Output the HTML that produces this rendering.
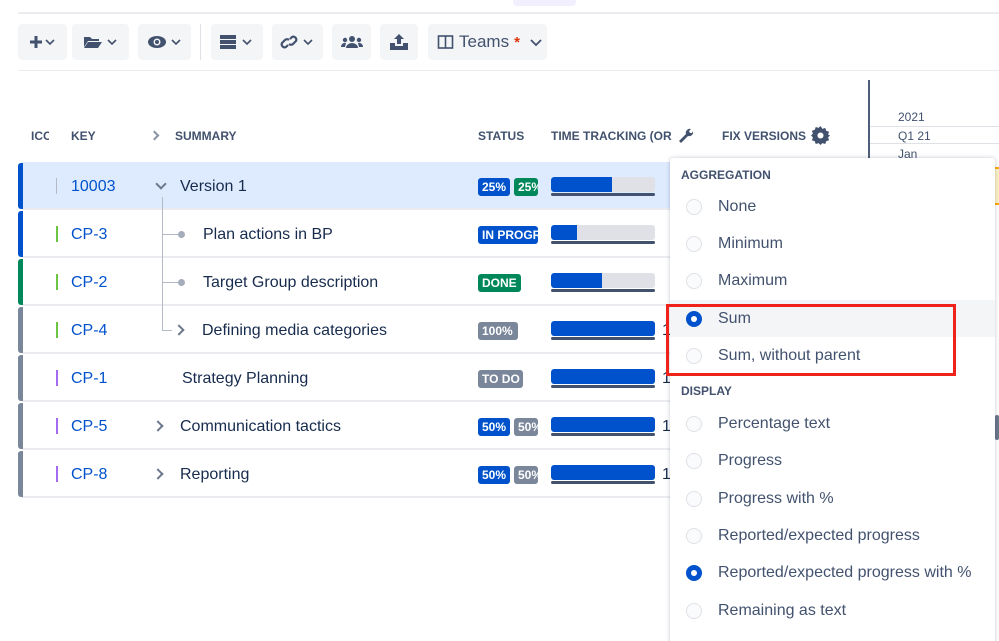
<!DOCTYPE html>
<html><head><meta charset="utf-8"><style>
*{box-sizing:border-box;margin:0;padding:0}
html,body{width:999px;height:641px;overflow:hidden}
body{background:#fff;font-family:"Liberation Sans",Arial,sans-serif;color:#172b4d;position:relative}
.a{position:absolute}
.btn{position:absolute;top:24px;height:36px;background:#f4f5f7;border-radius:4px;display:flex;align-items:center;justify-content:center;gap:4px}
.hd{position:absolute;top:129px;font-size:12px;font-weight:bold;color:#42526e}
.row{position:absolute;left:22px;width:660px;height:48px;border-bottom:2px solid #ebecf0}
.stripe{position:absolute;left:18px;width:5px;height:46px;border-radius:3px 0 0 3px}
.key{position:absolute;left:71px;font-size:16px;color:#0052cc}
.ib{position:absolute;left:56px;width:2px;height:16px}
.sum{position:absolute;font-size:16px;color:#172b4d}
.bd{position:absolute;height:18px;border-radius:3px;color:#fff;font-size:12px;font-weight:bold;line-height:18px;padding-left:4px;overflow:hidden;white-space:nowrap}
.bar{position:absolute;left:551px;width:104px;height:15px;background:#dfe1e6;border-radius:3px;overflow:hidden}
.bar i{display:block;height:100%;background:#0052cc;border-radius:3px 0 0 3px}
.ul{position:absolute;left:551px;width:104px;height:3px;background:#42526e;border-radius:2px}
.one{position:absolute;left:662px;font-size:16px;color:#172b4d}
.pop{position:absolute;left:670px;top:158px;width:325px;height:490px;background:#fff;box-shadow:0 0 4px rgba(9,30,66,.25);border-radius:3px}
.it{position:absolute;left:0;width:325px;height:37px;font-size:16px;color:#42526e}
.it span{position:absolute;left:48px;top:10px}
.rd{position:absolute;left:16px;top:11px;width:16px;height:16px;border-radius:50%;border:1.5px solid #dfe1e6;background:#fafbfc}
.rd.on{border:none;background:#0052cc}
.rd.on:after{content:"";position:absolute;left:5px;top:5px;width:6px;height:6px;border-radius:50%;background:#fff}
.sec{position:absolute;left:11px;font-size:12px;font-weight:bold;color:#42526e}
.chev{position:absolute;width:8px;height:8px;border-right:2px solid #6b778c;border-bottom:2px solid #6b778c}
</style></head><body>
<div class="a" style="left:513px;top:0;width:63px;height:6px;background:#eae6ff;border-radius:0 0 4px 4px;opacity:.6"></div>
<div class="a" style="left:18px;top:12px;width:981px;height:2px;background:#ebecf0"></div>
<div class="a" style="left:18px;top:70px;width:981px;height:1px;background:#ebecf0"></div>

<div class="btn" style="left:18px;width:49px"><svg width="28" height="14" viewBox="0 0 28 14"><path d="M7 1v12M1 7h12" stroke="#42526e" stroke-width="3"/><path d="M17 5l4 4 4-4" stroke="#42526e" stroke-width="1.6" fill="none"/></svg></div>
<div class="btn" style="left:72px;width:57px"><svg width="36" height="14" viewBox="0 0 36 14"><path d="M1 2h6l2 2h7v2H5L1 12z M5 7h14l-4 6H1z" fill="#42526e"/><path d="M25 5l4 4 4-4" stroke="#42526e" stroke-width="1.6" fill="none"/></svg></div>
<div class="btn" style="left:138px;width:53px"><svg width="36" height="14" viewBox="0 0 36 14"><ellipse cx="10" cy="7" rx="9" ry="6" fill="#42526e"/><circle cx="10" cy="7" r="3.5" fill="#f4f5f7"/><circle cx="10" cy="7" r="2" fill="#42526e"/><path d="M25 5l4 4 4-4" stroke="#42526e" stroke-width="1.6" fill="none"/></svg></div>
<div class="a" style="left:200px;top:24px;width:1px;height:36px;background:#dfe1e6"></div>
<div class="btn" style="left:211px;width:52px"><svg width="36" height="16" viewBox="0 0 36 16"><rect x="1" y="1" width="16" height="4" fill="#42526e"/><rect x="1" y="6" width="16" height="4" fill="#42526e"/><rect x="1" y="11" width="16" height="4" fill="#42526e"/><path d="M24 6l4 4 4-4" stroke="#42526e" stroke-width="1.6" fill="none"/></svg></div>
<div class="btn" style="left:272px;width:51px"><svg width="36" height="18" viewBox="0 0 36 18"><path d="M8 12l-2 2a3 3 0 0 1-4-4l3-3a3 3 0 0 1 4 0M10 6l2-2a3 3 0 0 1 4 4l-3 3a3 3 0 0 1-4 0" stroke="#42526e" stroke-width="2.2" fill="none"/><path d="M24 7l4 4 4-4" stroke="#42526e" stroke-width="1.6" fill="none"/></svg></div>
<div class="btn" style="left:332px;width:39px"><svg width="22" height="14" viewBox="0 0 22 14"><circle cx="11" cy="4" r="3" fill="#42526e"/><circle cx="4" cy="5" r="2.2" fill="#42526e"/><circle cx="18" cy="5" r="2.2" fill="#42526e"/><path d="M5 13a6 5 0 0 1 12 0z M0 12a4 4 0 0 1 5-4l-1 4z M22 12a4 4 0 0 0-5-4l1 4z" fill="#42526e"/></svg></div>
<div class="btn" style="left:380px;width:38px"><svg width="20" height="18" viewBox="0 0 20 18"><path d="M10 1l5 5h-3v5H8V6H5z" fill="#42526e"/><path d="M1 10h5v3h8v-3h5v7H1z" fill="#42526e"/></svg></div>
<div class="btn" style="left:428px;width:119px;justify-content:flex-start;padding-left:9px;gap:0"><svg width="18" height="16" viewBox="0 0 18 16"><rect x="1.5" y="2" width="14" height="12" fill="none" stroke="#42526e" stroke-width="1.6"/><path d="M8.5 2v12" stroke="#42526e" stroke-width="1.6"/></svg><span style="font-size:17px;color:#42526e;margin-left:4px">Teams</span><span style="color:#de350b;font-weight:bold;margin-left:5px;font-size:15px">*</span><svg style="margin-left:10px" width="12" height="10" viewBox="0 0 12 10"><path d="M1 3l5 5 5-5" stroke="#42526e" stroke-width="1.8" fill="none"/></svg></div>

<div class="hd" style="left:31px;width:18px;overflow:hidden">ICON</div>
<div class="hd" style="left:71px">KEY</div>
<div class="chev" style="left:151px;top:132px;transform:rotate(-45deg);border-color:#8993a4;width:7px;height:7px"></div>
<div class="hd" style="left:175px">SUMMARY</div>
<div class="hd" style="left:478px">STATUS</div>
<div class="hd" style="left:551px">TIME TRACKING (OR</div>
<svg class="a" style="left:677px;top:127px" width="16" height="16" viewBox="0 0 16 16"><path d="M2 14l7-7a4 4 0 0 1 5-5l-2 2 1 2 2 0 1-2a4 4 0 0 1-5 5l-7 7z" fill="#42526e"/></svg>
<div class="hd" style="left:722px">FIX VERSIONS</div>
<svg class="a" style="left:811px;top:126px" width="19" height="19" viewBox="0 0 20 20"><path d="M10 0l2 3 3-1 1 3 3 1-1 3 2 1-2 2 1 3-3 1-1 3-3-1-2 2-2-2-3 1-1-3-3-1 1-3-2-2 2-2-1-3 3-1 1-3 3 1z" fill="#42526e"/><circle cx="10" cy="10" r="3.2" fill="#fff"/></svg>

<div class="a" style="left:868px;top:80px;width:2px;height:90px;background:#505f79"></div>
<div class="a" style="left:898px;top:110px;font-size:12px;color:#42526e">2021</div>
<div class="a" style="left:870px;top:126px;width:129px;height:1px;background:#dfe1e6"></div>
<div class="a" style="left:898px;top:129px;font-size:12px;color:#42526e">Q1 21</div>
<div class="a" style="left:870px;top:143px;width:129px;height:1px;background:#dfe1e6"></div>
<div class="a" style="left:898px;top:147px;font-size:12px;color:#42526e">Jan</div>
<div class="a" style="left:995px;top:167px;width:4px;height:38px;background:#fdf1c4;border-top:2px solid #ffab00;border-bottom:2px solid #ffab00"></div>
<div class="a" style="left:995px;top:415px;width:4px;height:25px;background:#6b778c;border-radius:2px"></div>

<div class="row" style="top:162px;background:#deebff"></div>
<div class="row" style="top:210px"></div>
<div class="row" style="top:258px"></div>
<div class="row" style="top:306px"></div>
<div class="row" style="top:354px"></div>
<div class="row" style="top:402px"></div>
<div class="row" style="top:450px"></div>
<div class="stripe" style="top:163px;background:#0052cc"></div>
<div class="stripe" style="top:211px;background:#0052cc"></div>
<div class="stripe" style="top:259px;background:#00875a"></div>
<div class="stripe" style="top:307px;background:#7a869a"></div>
<div class="stripe" style="top:355px;background:#7a869a"></div>
<div class="stripe" style="top:403px;background:#7a869a"></div>
<div class="stripe" style="top:451px;background:#7a869a"></div>

<div class="ib" style="top:178px;background:#b3bac5;width:1px"></div>
<div class="ib" style="top:226px;background:#6cc644"></div>
<div class="ib" style="top:274px;background:#6cc644"></div>
<div class="ib" style="top:322px;background:#6cc644"></div>
<div class="ib" style="top:370px;background:#a36bf0"></div>
<div class="ib" style="top:418px;background:#a36bf0"></div>
<div class="ib" style="top:466px;background:#a36bf0"></div>

<div class="key" style="top:178px">10003</div>
<div class="key" style="top:226px">CP-3</div>
<div class="key" style="top:274px">CP-2</div>
<div class="key" style="top:322px">CP-4</div>
<div class="key" style="top:370px">CP-1</div>
<div class="key" style="top:418px">CP-5</div>
<div class="key" style="top:466px">CP-8</div>

<div class="chev" style="left:157px;top:180px;transform:rotate(45deg)"></div>
<div class="sum" style="left:180px;top:178px">Version 1</div>
<div class="a" style="left:162px;top:197px;width:1px;height:133px;background:#b3bac5"></div>
<div class="a" style="left:162px;top:234px;width:18px;height:1px;background:#b3bac5"></div>
<div class="a" style="left:178px;top:231px;width:7px;height:7px;border-radius:50%;background:#a5adba"></div>
<div class="sum" style="left:203px;top:226px">Plan actions in BP</div>
<div class="a" style="left:162px;top:282px;width:18px;height:1px;background:#b3bac5"></div>
<div class="a" style="left:178px;top:279px;width:7px;height:7px;border-radius:50%;background:#a5adba"></div>
<div class="sum" style="left:203px;top:274px">Target Group description</div>
<div class="a" style="left:162px;top:330px;width:10px;height:1px;background:#b3bac5"></div>
<div class="chev" style="left:175px;top:326px;transform:rotate(-45deg)"></div>
<div class="sum" style="left:202px;top:322px">Defining media categories</div>
<div class="sum" style="left:182px;top:370px">Strategy Planning</div>
<div class="chev" style="left:154px;top:422px;transform:rotate(-45deg)"></div>
<div class="sum" style="left:180px;top:418px">Communication tactics</div>
<div class="chev" style="left:154px;top:470px;transform:rotate(-45deg)"></div>
<div class="sum" style="left:180px;top:466px">Reporting</div>

<div class="bd" style="left:478px;top:178px;width:32px;background:#0052cc">25%</div>
<div class="bd" style="left:514px;top:178px;width:24px;background:#00875a">25%</div>
<div class="bd" style="left:478px;top:226px;width:60px;background:#0052cc">IN PROGRESS</div>
<div class="bd" style="left:478px;top:274px;width:43px;background:#00875a">DONE</div>
<div class="bd" style="left:478px;top:322px;width:40px;background:#7a869a">100%</div>
<div class="bd" style="left:478px;top:370px;width:45px;background:#7a869a">TO DO</div>
<div class="bd" style="left:478px;top:418px;width:32px;background:#0052cc">50%</div>
<div class="bd" style="left:514px;top:418px;width:24px;background:#7a869a">50%</div>
<div class="bd" style="left:478px;top:466px;width:32px;background:#0052cc">50%</div>
<div class="bd" style="left:514px;top:466px;width:24px;background:#7a869a">50%</div>

<div class="bar" style="top:177px"><i style="width:61px"></i></div><div class="ul" style="top:193px"></div>
<div class="bar" style="top:225px"><i style="width:26px"></i></div><div class="ul" style="top:241px"></div>
<div class="bar" style="top:273px"><i style="width:51px"></i></div><div class="ul" style="top:289px"></div>
<div class="bar" style="top:321px"><i style="width:104px"></i></div><div class="ul" style="top:337px"></div>
<div class="bar" style="top:369px"><i style="width:104px"></i></div><div class="ul" style="top:385px"></div>
<div class="bar" style="top:417px"><i style="width:104px"></i></div><div class="ul" style="top:433px"></div>
<div class="bar" style="top:465px"><i style="width:104px"></i></div><div class="ul" style="top:481px"></div>
<div class="one" style="top:322px">1</div>
<div class="one" style="top:370px">1</div>
<div class="one" style="top:418px">1</div>
<div class="one" style="top:466px">1</div>

<div class="pop">
<div class="sec" style="top:10px">AGGREGATION</div>
<div class="it" style="top:30px"><div class="rd"></div><span>None</span></div>
<div class="it" style="top:67px"><div class="rd"></div><span>Minimum</span></div>
<div class="it" style="top:104px"><div class="rd"></div><span>Maximum</span></div>
<div class="it" style="top:142px;background:#f4f5f7"><div class="rd on"></div><span>Sum</span></div>
<div class="it" style="top:179px"><div class="rd"></div><span>Sum, without parent</span></div>
<div class="sec" style="top:226px">DISPLAY</div>
<div class="it" style="top:247px"><div class="rd"></div><span>Percentage text</span></div>
<div class="it" style="top:284px"><div class="rd"></div><span>Progress</span></div>
<div class="it" style="top:322px"><div class="rd"></div><span>Progress with %</span></div>
<div class="it" style="top:359px"><div class="rd"></div><span>Reported/expected progress</span></div>
<div class="it" style="top:396px"><div class="rd on"></div><span>Reported/expected progress with %</span></div>
<div class="it" style="top:434px"><div class="rd"></div><span>Remaining as text</span></div>
<div class="it" style="top:472px"><div class="rd"></div><span>Remaining as bar</span></div>
</div>
<div class="a" style="left:666px;top:304px;width:290px;height:72px;border:3px solid #f0231b"></div>
</body></html>
